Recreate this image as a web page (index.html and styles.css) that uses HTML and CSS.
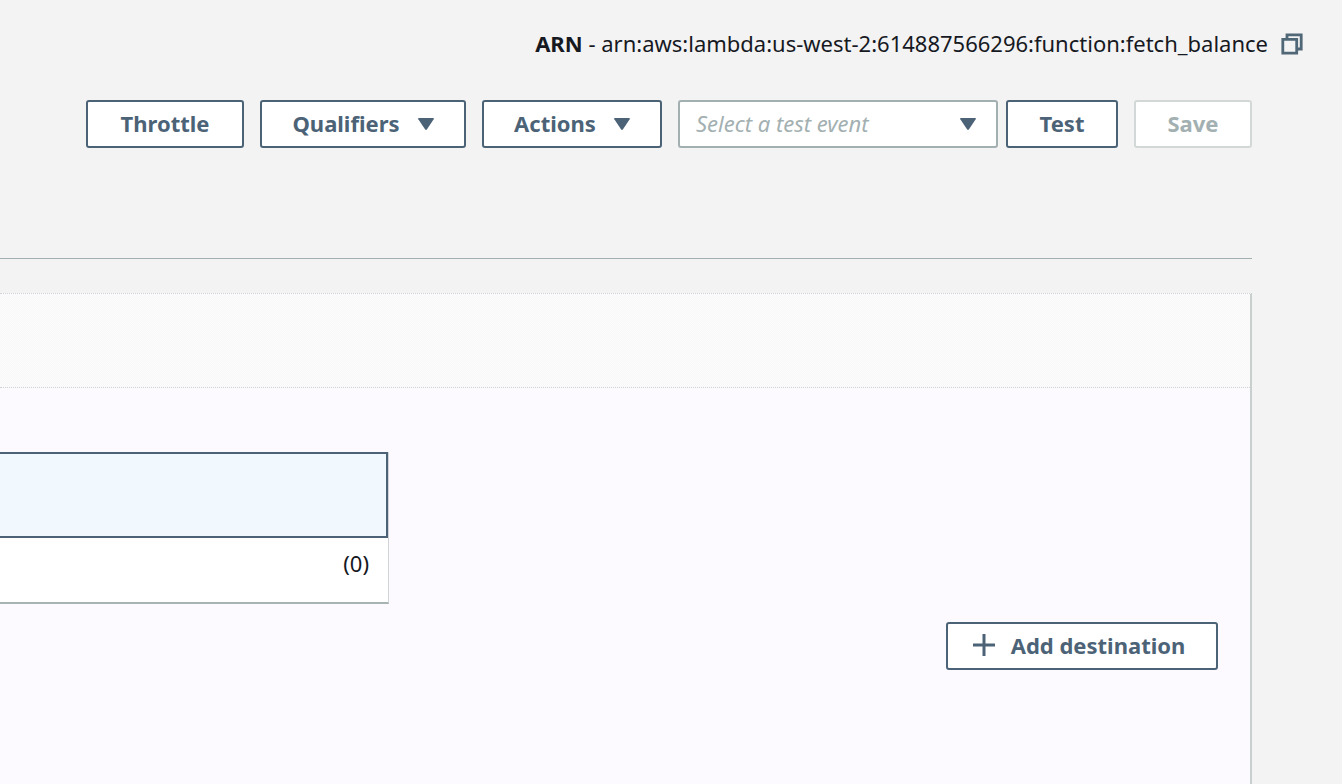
FILE: index.html
```
<!DOCTYPE html>
<html lang="en">
<head>
<meta charset="utf-8">
<title>fetch_balance</title>
<link rel="stylesheet" href="styles.css">
</head>
<body>
<header class="arn">
  <p class="arn-text"><strong>ARN</strong> - arn:aws:lambda:us-west-2:614887566296:function:fetch_balance</p>
  <button class="copy" type="button" aria-label="Copy ARN">
    <svg width="22" height="22" viewBox="0 0 22 22" fill="none" stroke="currentColor" stroke-width="2.8"><path d="M6 6V1.800h14.200V16H16"/><path d="M1.800 6.300h13.900v13.900H1.800z"/></svg>
  </button>
</header>
<main class="page">
  <div class="toolbar">
    <button class="btn btn-throttle" type="button">Throttle</button>
    <button class="btn btn-qualifiers" type="button">Qualifiers
      <svg class="caret" width="16" height="12" viewBox="0 0 16 12"><path d="M1 0h14q1.400 0 .7 1.200L9 11.200q-1 1.400-2 0L.3 1.200Q-.4 0 1 0z"/></svg>
    </button>
    <button class="btn btn-actions" type="button">Actions
      <svg class="caret" width="16" height="12" viewBox="0 0 16 12"><path d="M1 0h14q1.400 0 .7 1.200L9 11.200q-1 1.400-2 0L.3 1.200Q-.4 0 1 0z"/></svg>
    </button>
    <div class="test-group">
      <div class="select-wrap">
        <select class="select" aria-label="Test event"><option>Select a test event</option></select>
        <svg class="caret select-caret" width="16" height="12" viewBox="0 0 16 12"><path d="M1 0h14q1.400 0 .7 1.200L9 11.200q-1 1.400-2 0L.3 1.200Q-.4 0 1 0z"/></svg>
      </div>
      <button class="btn btn-test" type="button">Test</button>
    </div>
    <button class="btn btn-save" type="button" disabled>Save</button>
  </div>
  <section class="designer">
    <div class="designer-head"></div>
    <div class="designer-body">
      <div class="node">
        <div class="node-function"></div>
        <div class="node-layers">(0)</div>
      </div>
      <button class="btn btn-destination" type="button">
        <svg width="22" height="24" viewBox="0 0 22 24" fill="none" stroke="currentColor" stroke-width="3"><path d="M11 1v22M0 12h22"/></svg>
        Add destination
      </button>
    </div>
  </section>
</main>
</body>
</html>
```
FILE: styles.css
```
* { box-sizing: border-box; }
html, body { height: 100%; }
body {
  margin: 0;
  display: flex;
  flex-direction: column;
  overflow: hidden;
  background: #f3f3f3;
  color: #16191f;
  font-family: "Noto Sans", "Open Sans", sans-serif;
  font-size: 22px;
  line-height: 32px;
}
.arn {
  display: flex;
  justify-content: flex-end;
  align-items: center;
  gap: 13px;
  padding: 27px 39px 0 0;
}
.arn-text { margin: 0; white-space: nowrap; }
.copy {
  display: flex;
  padding: 2px 0 0;
  border: 0;
  background: none;
  color: #506778;
}
.page {
  flex: 1;
  display: flex;
  flex-direction: column;
  padding: 41px 90px 0 0;
}
.toolbar {
  display: flex;
  justify-content: flex-end;
  gap: 16px;
  padding-bottom: 110px;
  border-bottom: 1px solid #a3b0b1;
}
.btn {
  display: flex;
  align-items: center;
  justify-content: center;
  gap: 18px;
  height: 48px;
  padding: 0 0 2px;
  border: 2px solid #4c6377;
  border-radius: 3px;
  background: #fff;
  color: #4c6377;
  font: bold 22px/32px "Noto Sans", "Open Sans", sans-serif;
  white-space: nowrap;
}
.btn-throttle { width: 158px; }
.btn-qualifiers { width: 206px; }
.btn-actions { width: 180px; }
.btn-test { width: 112px; }
.btn-save { width: 118px; border-color: #d2d8d8; color: #a3b0b1; }
.caret { fill: #4c6377; }
.btn .caret { margin-top: 2px; }
.test-group { display: flex; gap: 8px; }
.select-wrap { position: relative; width: 320px; }
.select {
  appearance: none;
  width: 100%;
  height: 48px;
  padding: 0 48px 2px 16px;
  border: 2px solid #a3b0b1;
  border-radius: 3px;
  background: #fff;
  color: #a3b0b1;
  font: italic 22px/32px "Noto Sans", "Open Sans", sans-serif;
}
.select-caret { position: absolute; right: 22px; top: 18px; pointer-events: none; }
.designer {
  flex: 1;
  display: flex;
  flex-direction: column;
  margin-top: 34px;
  border-top: 1px dotted #d0d4d6;
  border-right: 2px solid #c8cfcf;
  background: #fcfaff;
}
.designer-head {
  height: 94px;
  border-bottom: 1px dotted #d0d4d6;
  background: repeating-conic-gradient(#f7f7f7 0 25%, #fdfdfd 0 50%) 0 0 / 2px 2px;
}
.designer-body {
  display: flex;
  justify-content: space-between;
  align-items: flex-start;
  padding: 64px 32px 0 0;
}
.node {
  width: 389px;
  border-right: 1px solid #d0d6d7;
  border-bottom: 2px solid #a8b3b4;
  background: #fff;
}
.node-function {
  height: 86px;
  border: 2px solid #4c6377;
  border-left: 0;
  background: #f1f9ff;
}
.node-layers { padding: 9px 19px 23px; text-align: right; }
.btn-destination { width: 272px; gap: 16px; margin-top: 170px; padding-right: 6px; }
```
